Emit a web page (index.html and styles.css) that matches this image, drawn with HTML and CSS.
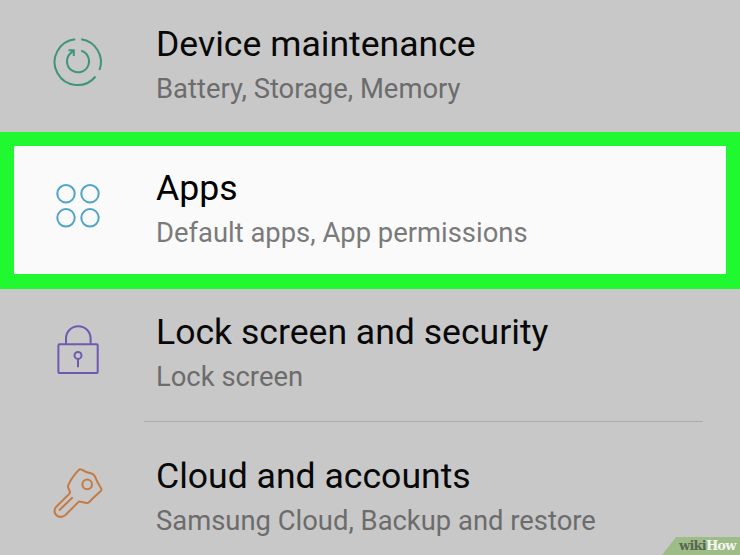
FILE: index.html
```html
<!DOCTYPE html>
<html lang="en">
<head>
    <meta charset="UTF-8">
    <meta name="viewport" content="width=device-width, initial-scale=1.0">
    <title>Settings</title>
    <link rel="stylesheet" href="styles.css">
</head>
<body>
    <main class="settings">
        <div class="row first">
            <svg class="icon maintenance" viewBox="0 0 80 88">
                <path d="M35.2 17.2A23 23 0 1 0 55.5 54.5M59.5 48A23 23 0 0 0 41.2 17.3"/>
                <path d="M41.2 28.8A11 11 0 1 1 30 31.8L33.8 28.2M28.5 28.2H33.8V34"/>
            </svg>
            <div class="text">
                <div class="title">Device maintenance</div>
                <div class="sub">Battery, Storage, Memory</div>
            </div>
        </div>

        <div class="row selected">
            <svg class="icon apps" viewBox="0 0 80 88">
                <circle cx="26" cy="27.7" r="8.7"/>
                <circle cx="50" cy="27.7" r="8.7"/>
                <circle cx="26" cy="51.8" r="8.7"/>
                <circle cx="50" cy="51.8" r="8.7"/>
            </svg>
            <div class="text">
                <div class="title">Apps</div>
                <div class="sub">Default apps, App permissions</div>
            </div>
        </div>

        <div class="row lock">
            <svg class="icon padlock" viewBox="0 0 80 88">
                <rect x="18.4" y="34.3" width="39.3" height="28.6" rx="1"/>
                <path d="M26 34V28.5A12.3 12.3 0 0 1 50.6 28.5V34M38 49V57.3"/>
                <circle cx="38" cy="45.4" r="3.5"/>
            </svg>
            <div class="text">
                <div class="title">Lock screen and security</div>
                <div class="sub">Lock screen</div>
            </div>
        </div>
        <hr class="divider">

        <div class="row last">
            <svg class="icon key" viewBox="0 0 80 88">
                <path d="M41.5 15.7Q46 18.5 51.5 19.5Q53.5 20 54.5 21.7Q57.5 29 61 34.2Q62 35.7 60.8 37Q54 43 49 48.2Q48 49.2 46.5 49L40.5 47.7Q39 47.3 38 48.4L25.5 61Q22.5 63.7 18.5 62.5Q13.5 60 14.8 55.2Q15.2 53.8 16.3 52.7L29.5 39.6Q30.2 38.8 29.8 37.5L28.1 33.3Q27.8 32.2 28.3 31.2Q31 24.5 38.3 16.4Q39.8 14.7 41.5 15.7Z"/>
                <path d="M19 56.5L32.7 43.2"/>
                <circle cx="47.2" cy="30.4" r="4.8"/>
            </svg>
            <div class="text">
                <div class="title">Cloud and accounts</div>
                <div class="sub">Samsung Cloud, Backup and restore</div>
            </div>
        </div>
    </main>
    <div class="watermark"><span class="wiki">wiki</span>How</div>
</body>
</html>
```

FILE: styles.css
```css
* {
    box-sizing: border-box;
}

body {
    margin: 0;
    background-color: #c8c8c8;
    font-family: Roboto, Arial, sans-serif;
    overflow: hidden;
}

.settings {
    height: 555px;
    overflow: hidden;
}

.row {
    display: flex;
    align-items: flex-start;
    padding-left: 40px;
}

.first {
    height: 132px;
    padding-top: 22px;
}

.selected {
    height: 157px;
    padding-top: 20px;
    padding-left: 26px;
    background-color: #fafafa;
    border: solid #20f92f;
    border-width: 14px 14px 15px;
}

.lock {
    height: 132px;
    padding-top: 21px;
}

.divider {
    height: 1px;
    margin: 0 37px 0 144px;
    border: none;
    background-color: #aaa;
}

.last {
    padding-top: 32px;
}

.icon {
    flex: none;
    width: 80px;
    height: 88px;
    margin-right: 36px;
    fill: none;
    stroke-width: 2;
}

.maintenance { stroke: #3f947c; }
.apps { stroke: #4da3c8; }
.padlock { stroke: #7158b0; }
.key { stroke: #c47a43; }

.title,
.sub {
    line-height: 44px;
    white-space: nowrap;
}

.title {
    margin-bottom: 1px;
    font-size: 35.6px;
    color: #080808;
}

.sub {
    font-size: 27.4px;
    color: #6c6c6c;
}

.selected .title {
    color: #000;
}

.selected .sub {
    color: #7a7a7a;
}

/* sits over the list in the corner */
.watermark {
    position: absolute;
    right: 0;
    bottom: 0;
    width: 78px;
    height: 18px;
    padding-left: 17px;
    background-color: #9dbc88;
    clip-path: polygon(14px 0, 100% 0, 100% 100%, 0 100%);
    color: #f4f7f1;
    font: bold 13px/18px "DejaVu Serif", serif;
    letter-spacing: -0.8px;
}

.wiki {
    color: #586650;
}
```
